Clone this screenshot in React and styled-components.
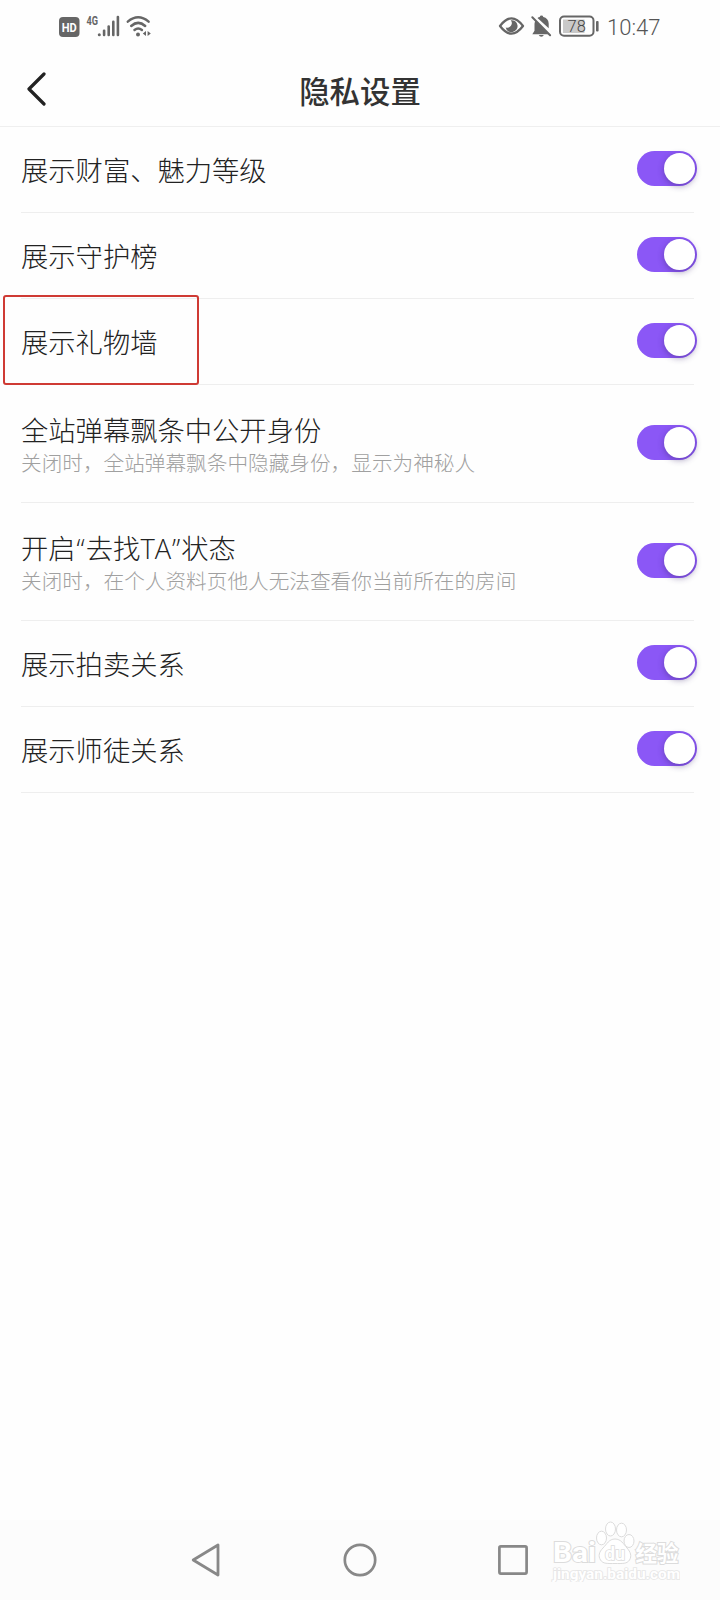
import React from "react";
import styled, { createGlobalStyle } from "styled-components";

const settings = [
  { id: "level", title: "展示财富、魅力等级" },
  { id: "guard", title: "展示守护榜" },
  { id: "gifts", title: "展示礼物墙", marked: true },
  {
    id: "identity",
    title: "全站弹幕飘条中公开身份",
    hint: "关闭时，全站弹幕飘条中隐藏身份，显示为神秘人",
  },
  {
    id: "find",
    title: (
      <>
        开启<Quote>“</Quote>去找TA<Quote>”</Quote>状态
      </>
    ),
    hint: "关闭时，在个人资料页他人无法查看你当前所在的房间",
  },
  { id: "auction", title: "展示拍卖关系" },
  { id: "mentor", title: "展示师徒关系" },
];

function Quote({ children }) {
  return <QuoteMark>{children}</QuoteMark>;
}

function SignalIcons() {
  return (
    <svg width="96" height="30" viewBox="56 10 96 30" fill="#666">
      <rect x="59" y="17" width="20.5" height="20" rx="4" />
      <text x="69.2" y="31.5" fill="#fff" fontSize="12.5" fontWeight="700" textAnchor="middle" textLength="15" lengthAdjust="spacingAndGlyphs">
        HD
      </text>
      <text x="86.5" y="25.3" fontSize="13.5" fontWeight="700" textLength="11.5" lengthAdjust="spacingAndGlyphs">
        4G
      </text>
      <circle cx="99.3" cy="34.7" r="1.5" />
      <rect x="102.8" y="29.5" width="2.6" height="6.8" rx="1.2" />
      <rect x="107.4" y="25.3" width="2.6" height="11" rx="1.2" />
      <rect x="112" y="20.5" width="2.6" height="15.8" rx="1.2" />
      <rect x="116.6" y="15.8" width="2.6" height="20.5" rx="1.2" />
      <g fill="none" stroke="#666" strokeWidth="2.5" strokeLinecap="round">
        <path d="M127.8 21.6Q138.2 13 148.6 21.6" />
        <path d="M131.2 26Q138.2 19.8 145.2 26" />
        <path d="M134.5 30Q138.2 27 141.9 30" />
      </g>
      <circle cx="138" cy="34.4" r="2" />
      <path d="M146 31v5l-3.2-2.5zM147.6 31v5l3.2-2.5z" />
    </svg>
  );
}

function StateIcons() {
  return (
    <svg width="104" height="30" viewBox="497 10 104 30" fill="#666">
      <path d="M500 26Q511.5 10.8 523 26Q511.5 41.2 500 26Z" fill="none" stroke="#666" strokeWidth="2.3" strokeLinejoin="round" />
      <path d="M510.8 20.2a6 6 0 1 1-5.1 7.2a4.6 4.6 0 0 0 5.1-7.2z" />
      <path d="M532.3 34.3l2.2-3.5v-7q.2-1.8 1-3l13 13.5zM537.5 18q1.2-.8 2.2-1q.3-1.4 1.8-1.4t1.8 1.4q5 1 5.4 6.5v4.8z" />
      <path d="M532.3 17.3l17.8 18" stroke="#666" strokeWidth="2" strokeLinecap="round" />
      <path d="M538.8 35h5q-.6 1.8-2.5 1.8t-2.5-1.8z" />
      <rect x="563" y="19.5" width="21.5" height="13.5" fill="#c9c9c9" />
      <rect x="560" y="16.6" width="33.5" height="19.2" rx="4" fill="none" stroke="#666" strokeWidth="2" />
      <rect x="596" y="21" width="2.6" height="10.5" rx="1" />
      <text x="576.7" y="32" fontSize="16.5" fontWeight="300" textAnchor="middle" fill="#444">
        78
      </text>
    </svg>
  );
}

function Watermark() {
  return (
    <svg width="130" height="64" viewBox="550 1518 130 64" fill="#fff" stroke="#dcdcdc">
      <OutlinedText x="553" y="1561.5" fontSize="27" strokeWidth="2" textLength="43" lengthAdjust="spacingAndGlyphs">
        Bai
      </OutlinedText>
      <ellipse cx="601.5" cy="1538" rx="5" ry="6.8" />
      <ellipse cx="610.5" cy="1529" rx="5" ry="7" />
      <ellipse cx="621.5" cy="1530" rx="5" ry="6.8" />
      <ellipse cx="629" cy="1541" rx="5" ry="6.5" />
      <path d="M615 1539c-6 0-8 5-12 9s-5 8-2.5 12s7 3.5 14.5 3.5s12 .5 14.5-3.5s1-8-2.5-12s-6-9-12-9z" />
      <OutlinedText x="605" y="1559.5" fontSize="19" strokeWidth="1.6" textLength="20" lengthAdjust="spacingAndGlyphs">
        du
      </OutlinedText>
      <OutlinedText x="635.5" y="1560.5" fontSize="21.5" strokeWidth="2" textLength="43" lengthAdjust="spacingAndGlyphs">
        经验
      </OutlinedText>
      <OutlinedText x="553" y="1579" fontSize="14" stroke="#e6e6e6" strokeWidth="1.6" textLength="127" lengthAdjust="spacingAndGlyphs">
        jingyan.baidu.com
      </OutlinedText>
    </svg>
  );
}

function App() {
  return (
    <Screen>
      <GlobalStyle />
      <StatusBar>
        <SignalIcons />
        <StatusRight>
          <StateIcons />
          <Time>10:47</Time>
        </StatusRight>
      </StatusBar>
      <Header>
        <BackButton>
          <svg width="20" height="34" viewBox="0 0 20 34" fill="none" stroke="#222" strokeWidth="3.2" strokeLinecap="round" strokeLinejoin="round">
            <path d="M17 2L2 17L17 32" />
          </svg>
        </BackButton>
        <Title>隐私设置</Title>
      </Header>
      <List>
        {settings.map((item) => (
          <Row key={item.id} $tall={!!item.hint}>
            <Labels>
              <Label>{item.title}</Label>
              {item.hint && <Hint>{item.hint}</Hint>}
            </Labels>
            <Switch role="switch" aria-checked="true">
              <Knob />
            </Switch>
            {item.marked && <Marker />}
          </Row>
        ))}
      </List>
      <NavBar>
        <svg width="30" height="36" viewBox="0 0 30 36" fill="none" stroke="#888" strokeWidth="2.8" strokeLinejoin="round">
          <path d="M27 3V33L2.2 18Z" />
        </svg>
        <svg width="34" height="34" viewBox="0 0 34 34" fill="none" stroke="#888" strokeWidth="2.7">
          <circle cx="17" cy="17" r="15.2" />
        </svg>
        <svg width="30" height="30" viewBox="0 0 30 30" fill="none" stroke="#888" strokeWidth="2.7">
          <rect x="1.4" y="1.4" width="27.2" height="27.2" rx="1.5" />
        </svg>
        <WatermarkLayer>
          <Watermark />
        </WatermarkLayer>
      </NavBar>
    </Screen>
  );
}

const GlobalStyle = createGlobalStyle`
  body {
    margin: 0;
    background: #fefefe;
  }
`;

const Screen = styled.div`
  display: flex;
  flex-direction: column;
  width: 720px;
  height: 1600px;
  overflow: hidden;
  background: #fefefe;
  color: #222;
  font-family: "Noto Sans CJK SC", sans-serif;

  svg {
    display: block;
    flex: none;
  }

  svg text {
    font-family: Roboto, "Noto Sans CJK SC", sans-serif;
  }
`;

const OutlinedText = styled.text`
  font-weight: 700;
  paint-order: stroke;
`;

const StatusBar = styled.div`
  display: flex;
  justify-content: space-between;
  box-sizing: border-box;
  height: 52px;
  padding: 10px 59px 0 56px;
`;

const StatusRight = styled.div`
  display: flex;
`;

const Time = styled.div`
  width: 60px;
  box-sizing: border-box;
  padding-left: 6px;
  font-family: Roboto, sans-serif;
  font-size: 22px;
  font-weight: 300;
  line-height: 35px;
  color: #555;
  white-space: nowrap;
`;

const Header = styled.header`
  display: grid;
  grid-template-columns: 60px 1fr 60px;
  align-items: center;
  box-sizing: border-box;
  height: 75px;
  border-bottom: 1px solid #efefef;
`;

const BackButton = styled.button`
  padding: 0 0 0 27px;
  border: 0;
  background: none;
`;

const Title = styled.h1`
  margin: 0;
  padding-top: 1px;
  font-size: 30.4px;
  font-weight: 500;
  line-height: 44px;
  text-align: center;
  color: #333;
`;

const List = styled.main`
  flex: 1;
`;

const Row = styled.section`
  position: relative;
  display: flex;
  align-items: center;
  justify-content: space-between;
  box-sizing: border-box;
  height: ${(props) => (props.$tall ? 118 : 86)}px;
  margin: 0 26px 0 21px;
  padding-bottom: 2px;
  border-bottom: 1px solid #eee;
`;

const Labels = styled.div`
  display: flex;
  flex-direction: column;
`;

/* a latin font first keeps the quotes around TA narrow */
const Label = styled.div`
  margin-bottom: -2px;
  padding-top: 2px;
  font-family: "Open Sans", "Noto Sans CJK SC", sans-serif;
  font-size: 27.3px;
  font-weight: 300;
  line-height: 36px;
  white-space: nowrap;
`;

const QuoteMark = styled.span`
  margin: 0 1px;
`;

const Hint = styled.div`
  margin: 1px 0 -1px;
  font-size: 20.65px;
  font-weight: 300;
  line-height: 28px;
  color: #a0a0a0;
  white-space: nowrap;
`;

const Switch = styled.div`
  display: flex;
  justify-content: flex-end;
  box-sizing: border-box;
  flex: none;
  width: 60px;
  height: 35px;
  margin-right: -3px;
  padding: 2px;
  border-radius: 18px;
  background: #8b57f6;
`;

const Knob = styled.div`
  width: 31px;
  height: 31px;
  border-radius: 50%;
  background: #fff;
  box-shadow: 0 2px 6px rgba(60, 40, 110, 0.45);
`;

const Marker = styled.div`
  position: absolute;
  top: -4px;
  left: -18px;
  box-sizing: border-box;
  width: 196px;
  height: 90px;
  border: 2px solid #cf3a34;
  border-radius: 3px;
`;

const NavBar = styled.nav`
  position: relative;
  display: flex;
  align-items: center;
  justify-content: space-between;
  box-sizing: border-box;
  height: 80px;
  padding: 0 192px 0 191px;
  background: #fcfcfc;
`;

const WatermarkLayer = styled.div`
  position: absolute;
  right: 40px;
  bottom: 18px;
`;

export default App;
